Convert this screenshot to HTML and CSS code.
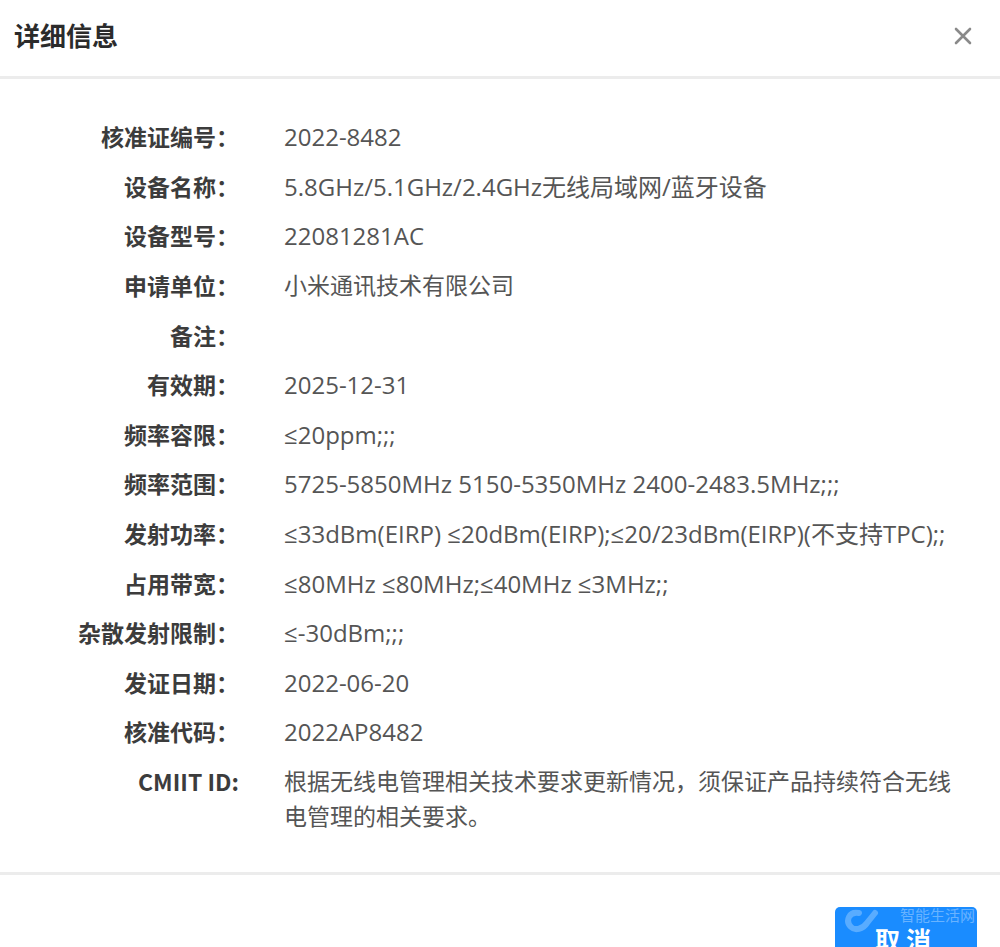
FILE: index.html
```html
<!DOCTYPE html>
<html lang="zh-CN">

<head>
    <meta charset="UTF-8">
    <meta name="viewport" content="width=device-width, initial-scale=1.0">
    <title>详细信息</title>
    <link rel="stylesheet" href="styles.css">
</head>

<body>
    <div class="dialog">
        <div class="dialog-header">
            <span class="dialog-title">详细信息</span>
            <a href="javascript:;" class="dialog-close">
                <svg width="18" height="18" viewBox="0 0 18 18">
                    <path d="M2 2 L16 16 M16 2 L2 16" stroke="#8a8a8a" stroke-width="2.6" stroke-linecap="round" />
                </svg>
            </a>
        </div>

        <div class="dialog-body">
            <div class="info-row"><span class="info-label">核准证编号：</span><span class="info-value">2022-8482</span></div>
            <div class="info-row"><span class="info-label">设备名称：</span><span class="info-value">5.8GHz/5.1GHz/2.4GHz无线局域网/蓝牙设备</span></div>
            <div class="info-row"><span class="info-label">设备型号：</span><span class="info-value">22081281AC</span></div>
            <div class="info-row"><span class="info-label">申请单位：</span><span class="info-value info-cjk">小米通讯技术有限公司</span></div>
            <div class="info-row"><span class="info-label">备注：</span><span class="info-value"></span></div>
            <div class="info-row"><span class="info-label">有效期：</span><span class="info-value">2025-12-31</span></div>
            <div class="info-row"><span class="info-label">频率容限：</span><span class="info-value">≤20ppm;;;</span></div>
            <div class="info-row"><span class="info-label">频率范围：</span><span class="info-value">5725-5850MHz 5150-5350MHz 2400-2483.5MHz;;;</span></div>
            <div class="info-row"><span class="info-label">发射功率：</span><span class="info-value">≤33dBm(EIRP) ≤20dBm(EIRP);≤20/23dBm(EIRP)(不支持TPC);;</span></div>
            <div class="info-row"><span class="info-label">占用带宽：</span><span class="info-value">≤80MHz ≤80MHz;≤40MHz ≤3MHz;;</span></div>
            <div class="info-row"><span class="info-label">杂散发射限制：</span><span class="info-value">≤-30dBm;;;</span></div>
            <div class="info-row"><span class="info-label">发证日期：</span><span class="info-value">2022-06-20</span></div>
            <div class="info-row"><span class="info-label">核准代码：</span><span class="info-value">2022AP8482</span></div>
            <div class="info-row"><span class="info-label">CMIIT ID:</span><span class="info-value info-cjk">根据无线电管理相关技术要求更新情况，须保证产品持续符合无线电管理的相关要求。</span></div>
        </div>

        <div class="dialog-footer">
            <a href="javascript:;" class="btn-cancel">
                <svg class="wm-logo" width="40" height="26" viewBox="0 0 40 26">
                    <path d="M16 4 C6 2 2 12 8 18 C12 22 20 20 24 14 L32 4" fill="none" stroke="rgba(255,255,255,.28)" stroke-width="6" stroke-linecap="round" />
                </svg>
                <span class="watermark">智能生活网</span>
                取消
            </a>
        </div>
    </div>
</body>

</html>
```

FILE: styles.css
```css
body,
div,
span,
a {
    padding: 0px;
    margin: 0px;
}

a {
    text-decoration: none;
}

body {
    width: 1000px;
    height: 947px;
    overflow: hidden;
    background-color: #fff;
    font-family: "Open Sans", "Noto Sans CJK SC", sans-serif;
}

.dialog {
    display: flex;
    flex-direction: column;
    height: 947px;
}

.dialog-header {
    flex-shrink: 0;
    display: flex;
    align-items: center;
    justify-content: space-between;
    height: 76px;
    padding: 0px 28px 0px 14px;
    border-bottom: 3px solid #ececec;
}

.dialog-title {
    font-family: "Noto Sans CJK SC", sans-serif;
    font-size: 26px;
    font-weight: 700;
    color: #2b2b2b;
    margin-top: -8px;
}

.dialog-close {
    display: flex;
    margin-top: -4px;
}

.dialog-body {
    flex-shrink: 0;
    box-sizing: border-box;
    height: 796px;
    padding-top: 33px;
    border-bottom: 3px solid #ececec;
}

.info-row {
    display: grid;
    grid-template-columns: 239px 680px;
    column-gap: 45px;
    line-height: 35px;
    padding: 7.3px 0px;
}

.info-label {
    text-align: right;
    font-family: "Noto Sans CJK SC", sans-serif;
    font-size: 23px;
    font-weight: 700;
    color: #3c3c3c;
}

.info-value {
    font-size: 24px;
    color: #555;
}

/* 纯中文的值字号略小 */
.info-value.info-cjk {
    font-size: 23px;
}

.dialog-footer {
    display: flex;
    justify-content: flex-end;
    padding: 32px 23px 0px 0px;
}

.btn-cancel {
    position: relative;
    display: block;
    box-sizing: border-box;
    width: 142px;
    height: 60px;
    padding-top: 17px;
    border-radius: 5px;
    background-color: #1a8cff;
    color: #fff;
    font-family: "Noto Sans CJK SC", sans-serif;
    font-size: 25px;
    font-weight: 700;
    letter-spacing: 6px;
    text-align: center;
    line-height: 30px;
}

.wm-logo {
    position: absolute;
    top: 2px;
    left: 8px;
}

.watermark {
    position: absolute;
    top: 1px;
    right: 2px;
    font-size: 15px;
    font-weight: 400;
    letter-spacing: 0px;
    line-height: 14px;
    color: rgba(255, 255, 255, .35);
}
```
